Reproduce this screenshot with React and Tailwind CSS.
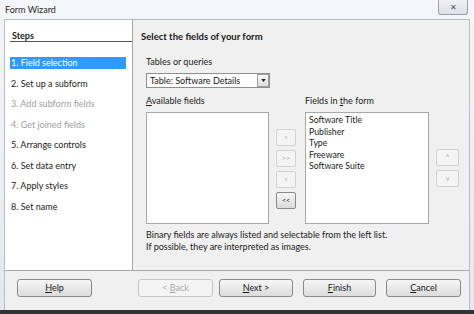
import React from "react";

const font = { fontFamily: 'Lato, "Noto Sans", sans-serif' };

function Btn({ children, disabled, className = "" }) {
  return (
    <div
      className={
        "h-[18px] flex items-center justify-center rounded-[3px] border text-[9px] " +
        (disabled
          ? "border-[#c4c6c8] bg-[#f4f4f4] text-[#a8a8a8] "
          : "border-[#8a8a8a] bg-gradient-to-b from-[#f6f6f6] to-[#dcdcdc] text-[#1a1a1a] ") +
        className
      }
    >
      {children}
    </div>
  );
}

function Small({ children, disabled, className = "" }) {
  return (
    <div
      className={
        "w-[20px] h-[17px] flex items-center justify-center rounded-[2px] border text-[7px] leading-none " +
        (disabled
          ? "border-[#d0d2d4] bg-[#f4f4f4] text-[#b0b0b0] "
          : "border-[#8a8a8a] bg-gradient-to-b from-[#f6f6f6] to-[#dadada] text-[#222] ") +
        className
      }
    >
      {children}
    </div>
  );
}

export default function App() {
  const steps = [
    ["1. Field selection", "sel"],
    ["2. Set up a subform", ""],
    ["3. Add subform fields", "dis"],
    ["4. Get joined fields", "dis"],
    ["5. Arrange controls", ""],
    ["6. Set data entry", ""],
    ["7. Apply styles", ""],
    ["8. Set name", ""],
  ];
  return (
    <div
      className="w-[474px] h-[314px] overflow-hidden flex flex-col bg-gradient-to-b from-[#f4f6f9] to-[#e4e8ee] text-[#1a1a1a]"
      style={font}
    >
      {/* title bar */}
      <div className="h-[19px] flex items-start justify-between shrink-0">
        <div className="pl-[5px] pt-[4px] text-[9px] leading-[12px] text-[#2a2a2a]">Form Wizard</div>
        <div className="mr-[6px] w-[30px] h-[15px] border border-t-0 border-[#9aa0a8] rounded-b-[3px] bg-gradient-to-b from-[#eef1f5] to-[#dde2e8] flex items-center justify-center text-[8px] leading-none text-[#555]">
          ✕
        </div>
      </div>

      {/* dialog body */}
      <div className="ml-[4px] mr-[4px] flex-1 flex flex-col border-l border-r border-t border-[#b8bcc2] bg-[#f0f0f0]">
        <div className="h-[251px] flex border-b border-[#a8a8a8] shrink-0">
          {/* left steps */}
          <div className="w-[128px] bg-white border-r border-[#a8a8a8] pl-[5px] pt-[11px]">
            <div className="text-[9px] font-bold leading-[10px] pl-[2px] border-b border-[#555]">Steps</div>
            <div className="mt-[15px] flex flex-col gap-[8.5px] pr-[6px]">
              {steps.map(([t, s]) => (
                <div
                  key={t}
                  className={
                    "h-[12px] text-[9px] leading-[12px] pl-[1px] whitespace-nowrap " +
                    (s === "sel" ? "bg-[#3399ff] text-white" : s === "dis" ? "text-[#a0a0a0]" : "text-[#1a1a1a]")
                  }
                >
                  {t}
                </div>
              ))}
            </div>
          </div>

          {/* right content */}
          <div className="flex-1 pl-[8px] pt-[11px]">
            <div className="text-[9.5px] font-bold leading-[12px]">Select the fields of your form</div>
            <div className="pl-[5px]">
              <div className="mt-[13px] text-[9px] leading-[12px]">Tables or queries</div>
              <div className="mt-[5px] w-[124px] h-[15px] bg-white border border-[#8e8f8f] flex items-center justify-between">
                <span className="pl-[3px] text-[9px] leading-[12px] whitespace-nowrap">Table: Software Details</span>
                <span className="w-[12px] h-[13px] border border-[#a0a0a0] bg-gradient-to-b from-[#f8f8f8] to-[#dedede] flex items-center justify-center">
                  <svg width="5" height="3" viewBox="0 0 6 4"><path d="M0 0H6L3 4Z" fill="#222" /></svg>
                </span>
              </div>

              <div className="mt-[7px] flex">
                <div className="w-[123px]">
                  <div className="text-[9px] leading-[12px]"><span className="underline">A</span>vailable fields</div>
                  <div className="mt-[5px] h-[112px] bg-white border border-[#a8a8a8]" />
                </div>
                <div className="ml-[7px] w-[20px] flex flex-col gap-[4px] pt-[34px]">
                  <Small disabled>&gt;</Small>
                  <Small disabled>&gt;&gt;</Small>
                  <Small disabled>&lt;</Small>
                  <Small>&lt;&lt;</Small>
                </div>
                <div className="ml-[9px] w-[124px]">
                  <div className="text-[9px] leading-[12px]">Fields in <span className="underline">t</span>he form</div>
                  <div className="mt-[5px] h-[112px] bg-white border border-[#a8a8a8] pl-[3px] pt-[1px] text-[8.7px] leading-[11.6px]">
                    <div>Software Title</div>
                    <div>Publisher</div>
                    <div>Type</div>
                    <div>Freeware</div>
                    <div>Software Suite</div>
                  </div>
                </div>
                <div className="ml-[7px] flex flex-col gap-[4px] pt-[54px]">
                  <div className="w-[23px] h-[17px] rounded-[2px] border border-[#d0d2d4] bg-[#f4f4f4] text-[#b0b0b0] text-[7px] flex items-center justify-center">^</div>
                  <div className="w-[23px] h-[17px] rounded-[2px] border border-[#d0d2d4] bg-[#f4f4f4] text-[#b0b0b0] text-[7px] flex items-center justify-center">v</div>
                </div>
              </div>

              <div className="mt-[5px] text-[9px] leading-[12px]">
                <div>Binary fields are always listed and selectable from the left list.</div>
                <div>If possible, they are interpreted as images.</div>
              </div>
            </div>
          </div>
        </div>

        {/* button row */}
        <div className="flex-1 flex items-start pt-[8px] pl-[12px]">
          <Btn className="w-[75px]"><span><span className="underline">H</span>elp</span></Btn>
          <Btn disabled className="w-[75px] ml-[46px]"><span>&lt; <span className="underline">B</span>ack</span></Btn>
          <Btn className="w-[74px] ml-[6px]"><span><span className="underline">N</span>ext &gt;</span></Btn>
          <Btn className="w-[73px] ml-[10px]"><span><span className="underline">F</span>inish</span></Btn>
          <Btn className="w-[75px] ml-[10px]"><span><span className="underline">C</span>ancel</span></Btn>
        </div>
      </div>
      <div className="h-[4px] bg-[#333] shrink-0" />
    </div>
  );
}
